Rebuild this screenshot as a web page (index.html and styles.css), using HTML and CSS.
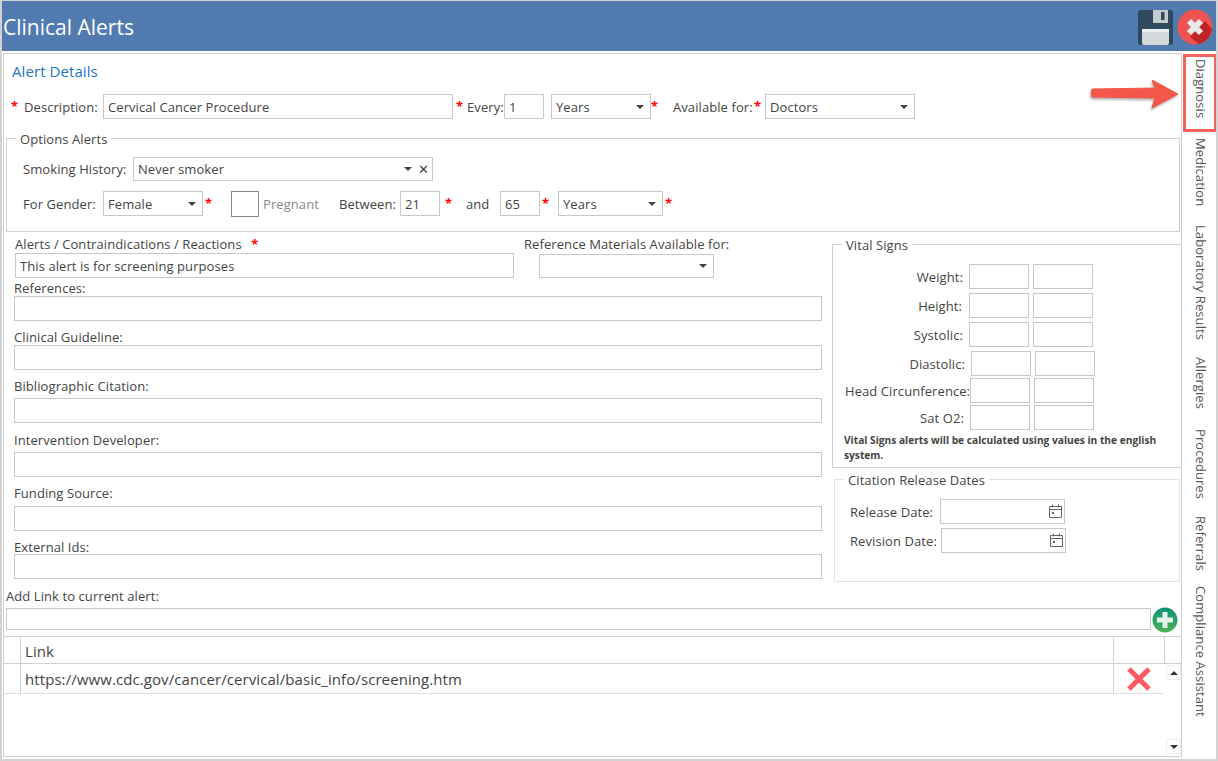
FILE: index.html
```html
<!DOCTYPE html>
<html lang="en">
<head>
<meta charset="utf-8">
<title>Clinical Alerts</title>
<link rel="stylesheet" href="styles.css">
</head>
<body>
<div class="window">
  <header class="titlebar">
    <h1 class="title">Clinical Alerts</h1>
    <div class="title-actions">
      <svg class="icon-save" viewBox="0 0 35 35" width="35" height="35">
        <rect width="35" height="35" rx="3" fill="#2f4a5e"/>
        <rect x="15" y="0" width="15" height="13" fill="#c5ccd0"/>
        <rect x="23" y="2" width="3.5" height="8" fill="#2f4a5e"/>
        <rect x="4" y="19" width="27" height="16" rx="2" fill="#d3d8da"/>
        <rect x="4" y="19" width="27" height="3" fill="#eceff0"/>
      </svg>
      <svg class="icon-close" viewBox="0 0 36 36" width="36" height="36">
        <circle cx="18" cy="18" r="17.5" fill="#ef5350"/>
        <path d="M13 28 L28 12 L35 20 A17.5 17.5 0 0 1 22 35 Z" fill="#b71c1c" opacity=".85"/>
        <path d="M12 12 L24 24 M24 12 L12 24" stroke="#eaeaea" stroke-width="6" fill="none"/>
      </svg>
    </div>
  </header>

  <div class="content">
    <main class="main">
      <h2 class="heading">Alert Details</h2>

      <div class="row row-top">
        <span class="req req-lead">*</span>
        <label class="lbl lbl-desc">Description:</label>
        <div class="box w-desc">Cervical Cancer Procedure</div>
        <span class="req req-a">*</span>
        <label class="lbl lbl-every">Every:</label>
        <div class="box w-num">1</div>
        <div class="box select w-years ml-7">Years<i class="caret"></i></div>
        <span class="req">*</span>
        <label class="lbl lbl-avail">Available for:</label>
        <span class="req">*</span>
        <div class="box select w-avail ml-5">Doctors<i class="caret"></i></div>
      </div>

      <fieldset class="group options">
        <legend>Options Alerts</legend>
        <div class="row row-smoke">
          <label class="lbl lbl-smoke">Smoking History:</label>
          <div class="box select w-smoke">Never smoker<i class="caret caret-x"></i><span class="clear">✕</span></div>
        </div>
        <div class="row row-gender">
          <label class="lbl lbl-gender">For Gender:</label>
          <div class="box select w-gender">Female<i class="caret"></i></div>
          <span class="req req-c">*</span>
          <span class="check"></span>
          <label class="lbl lbl-preg">Pregnant</label>
          <label class="lbl lbl-between">Between:</label>
          <div class="box w-num">21</div>
          <span class="req req-d">*</span>
          <label class="lbl lbl-and">and</label>
          <div class="box w-num">65</div>
          <span class="req req-c">*</span>
          <div class="box select w-years2 ml-10">Years<i class="caret"></i></div>
          <span class="req req-c">*</span>
        </div>
      </fieldset>

      <section class="columns">
        <div class="col-left">
          <div class="alerts-grid">
            <div class="alerts-main">
              <label class="lbl-block alerts-label">Alerts / Contraindications / Reactions <span class="req req-inline">*</span></label>
              <div class="box w-alerts h-25">This alert is for screening purposes</div>
            </div>
            <div class="alerts-ref">
              <label class="lbl-block">Reference Materials Available for:</label>
              <div class="box select w-ref h-24">&nbsp;<i class="caret"></i></div>
            </div>
          </div>
          <div class="field f-refs"><label class="lbl-block">References:</label><div class="box w-full h-25"></div></div>
          <div class="field"><label class="lbl-block">Clinical Guideline:</label><div class="box w-full h-25"></div></div>
          <div class="field gap-4"><label class="lbl-block">Bibliographic Citation:</label><div class="box w-full h-25"></div></div>
          <div class="field gap-4 f-dev"><label class="lbl-block">Intervention Developer:</label><div class="box w-full h-25"></div></div>
          <div class="field gap-5"><label class="lbl-block">Funding Source:</label><div class="box w-full h-25"></div></div>
          <div class="field gap-n1"><label class="lbl-block">External Ids:</label><div class="box w-full h-25"></div></div>
        </div>

        <div class="col-right">
          <fieldset class="group vitals">
            <legend>Vital Signs</legend>
            <div class="vital"><label class="vital-lbl">Weight:</label><div class="box v-box"></div><div class="box v-box"></div></div>
            <div class="vital"><label class="vital-lbl l-height">Height:</label><div class="box v-box"></div><div class="box v-box"></div></div>
            <div class="vital"><label class="vital-lbl">Systolic:</label><div class="box v-box"></div><div class="box v-box"></div></div>
            <div class="vital vital-shift2"><label class="vital-lbl">Diastolic:</label><div class="box v-box"></div><div class="box v-box"></div></div>
            <div class="vital vital-tight vital-shift1"><label class="vital-lbl">Head Circunference:</label><div class="box v-box"></div><div class="box v-box"></div></div>
            <div class="vital vital-tight vital-shift1"><label class="vital-lbl l-sat">Sat O2:</label><div class="box v-box"></div><div class="box v-box"></div></div>
            <p class="note">Vital Signs alerts will be calculated using values in the english system.</p>
          </fieldset>
          <fieldset class="group citation">
            <legend>Citation Release Dates</legend>
            <div class="date-row">
              <label class="lbl lbl-release">Release Date:</label>
              <div class="box w-date">
                <svg class="cal" viewBox="0 0 13 14" width="13" height="14"><path d="M.5 2.5h12v11H.5zM.5 5.5h12M3.5 .5v3M9.5 .5v3" fill="none" stroke="#666"/><rect x="3" y="8" width="2" height="2" fill="#666"/></svg>
              </div>
            </div>
            <div class="date-row date-row-2">
              <label class="lbl lbl-revision">Revision Date:</label>
              <div class="box w-date">
                <svg class="cal" viewBox="0 0 13 14" width="13" height="14"><path d="M.5 2.5h12v11H.5zM.5 5.5h12M3.5 .5v3M9.5 .5v3" fill="none" stroke="#666"/><rect x="3" y="8" width="2" height="2" fill="#666"/></svg>
              </div>
            </div>
          </fieldset>
        </div>
      </section>

      <label class="lbl-block add-label">Add Link to current alert:</label>
      <div class="add-row">
        <div class="box w-link"></div>
        <svg class="icon-plus" viewBox="0 0 26 26" width="26" height="26">
          <defs><linearGradient id="plusfill" x1="0" y1="0" x2="0" y2="1"><stop offset="0" stop-color="#0f9178"/><stop offset="1" stop-color="#4cb25a"/></linearGradient></defs>
          <circle cx="13" cy="13" r="12.5" fill="url(#plusfill)"/>
          <path d="M10.5 5h5v5.5H21v5h-5.500v5.500h-5v-5.500H5v-5h5.500z" fill="#e6f3ec"/>
        </svg>
      </div>

      <div class="grid">
        <div class="grid-head">
          <div class="cell-gutter"></div>
          <div class="cell-link">Link</div>
          <div class="cell-action"></div>
          <div class="cell-scroll"></div>
        </div>
        <div class="grid-body">
          <div class="grid-rows">
            <div class="grid-row">
              <div class="cell-gutter"></div>
              <div class="cell-link">https://www.cdc.gov/cancer/cervical/basic_info/screening.htm</div>
              <div class="cell-action">
                <svg viewBox="0 0 26 26" width="26" height="26"><path d="M3 3 L23 23 M23 3 L3 23" stroke="#ff5a5f" stroke-width="5"/></svg>
              </div>
            </div>
          </div>
          <div class="scrollbar">
            <span class="scroll-btn"><i class="tri-up"></i></span>
            <span class="scroll-btn"><i class="tri-down"></i></span>
          </div>
        </div>
      </div>
    </main>

    <nav class="tabs">
      <div class="tab tab-on">Diagnosis</div>
      <div class="tab">Medication</div>
      <div class="tab">Laboratory Results</div>
      <div class="tab">Allergies</div>
      <div class="tab">Procedures</div>
      <div class="tab">Referrals</div>
      <div class="tab">Compliance Assistant</div>
    </nav>
  </div>

  <div class="annot-box"></div>
  <svg class="annot-arrow" viewBox="0 0 92 34" width="92" height="34">
    <path d="M4 13 Q3 17 4 21 L67 22 L64 32 L90 18 L64 4 L67 12 Z" fill="#f4564a" stroke="#f4564a" stroke-linejoin="round"/>
  </svg>
</div>
</body>
</html>
```

FILE: styles.css
```css
* { box-sizing: border-box; }
html, body { margin: 0; padding: 0; }
body {
  font-family: "Open Sans", "Noto Sans", sans-serif;
  font-size: 13px;
  letter-spacing: .08px;
  color: #444;
  background: #fff;
}
.window {
  position: relative;
  width: 1218px;
  height: 761px;
  display: flex;
  flex-direction: column;
  border: 2px solid #d2d2d2;
  border-top: 1px solid #d2d2d2;
  overflow: hidden;
}
.titlebar {
  height: 50px;
  flex: none;
  margin-left: -2px;
  background: #517bb0;
  display: flex;
  align-items: center;
  justify-content: space-between;
  padding: 0 3px 0 3px;
}
.title {
  margin: 0;
  padding-top: 2px;
  font-size: 21px;
  font-weight: 400;
  letter-spacing: 0;
  color: #fff;
}
.title-actions { display: flex; align-items: center; gap: 4px; padding-top: 2px; }
.content {
  flex: 1;
  min-height: 0;
  display: flex;
  padding: 2px 0 2px 1px;
}
.main {
  width: 1179px;
  flex: none;
  border: 1px solid #cfcfcf;
  display: flex;
  flex-direction: column;
}
.heading {
  margin: 7px 0 0 8px;
  height: 20px;
  line-height: 20px;
  font-size: 15px;
  font-weight: 400;
  color: #1b75c4;
}
.row { display: flex; align-items: center; }
.row-top { margin-top: 13px; height: 25px; flex: none; }
.row-top .box { height: 25px; line-height: 24px; }
.lbl { white-space: nowrap; flex: none; }
.lbl-block { display: block; height: 16px; line-height: 16px; white-space: nowrap; }
.req { color: #f00; font-weight: 700; width: 6px; flex: none; line-height: 1; font-size: 13px; }
.req-lead { margin-left: 7px; }
.req-a { margin-left: 3px; }
.req-c { margin-left: 2px; }
.req-d { margin-left: 5px; }
.req-inline { width: auto; margin-left: 6px; }
.lbl-desc { margin-left: 7px; width: 79px; }
.lbl-every { margin-left: 5px; width: 37px; }
.lbl-avail { margin-left: 16px; width: 81px; }
.box {
  position: relative;
  height: 24px;
  line-height: 22px;
  border: 1px solid #c8c8c8;
  background: #fff;
  padding: 0 4px;
  white-space: nowrap;
  flex: none;
}
.h-25 { height: 25px; line-height: 24px; }
.h-24 { height: 24px; }
.w-desc { width: 350px; }
.w-num { width: 40px; }
.w-years { width: 100px; }
.w-avail { width: 150px; }
.ml-5 { margin-left: 5px; }
.ml-7 { margin-left: 7px; }
.ml-10 { margin-left: 10px; }
.caret {
  position: absolute;
  right: 6px;
  top: 50%;
  margin-top: -2px;
  border-left: 4px solid transparent;
  border-right: 4px solid transparent;
  border-top: 4px solid #444;
}
.caret-x { right: 20px; }
.clear { position: absolute; right: 3px; top: 0; font-size: 13px; color: #444; }

.group {
  margin: 0;
  border: 1px solid #cfcfcf;
  padding: 0;
}
.group legend {
  padding: 0 4px;
  height: 18px;
  line-height: 20px;
}
.options {
  margin: 10px 0 0 2px;
  width: 1174px;
  height: 103px;
  flex: none;
  padding: 0 16px;
}
.options legend { margin-left: -7px; }
.row-smoke { margin-top: 10px; height: 24px; }
.row-smoke .box { height: 24px; line-height: 23px; }
.row-gender { margin-top: 10px; height: 25px; }
.row-gender .box { height: 25px; line-height: 24px; }
.lbl-smoke { width: 110px; }
.w-smoke { width: 300px; }
.lbl-gender { width: 80px; }
.w-gender { width: 100px; }
.check {
  flex: none;
  width: 28px;
  height: 26px;
  margin-left: 20px;
  border: 1px solid #888;
  background: #fff;
}
.lbl-preg { margin-left: 4px; width: 56px; color: #888; }
.lbl-between { margin-left: 20px; width: 61px; }
.lbl-and { margin-left: 15px; width: 34px; }
.w-years2 { width: 105px; }

.columns { display: flex; flex: none; margin-top: 3px; height: 347px; }
.col-left { flex: none; width: 828px; padding: 1px 0 0 10px; }
.alerts-grid { display: flex; }
.alerts-main { margin-left: 1px; width: 509px; }
.alerts-label { margin-bottom: 1px; }
.alerts-ref { position: relative; }
.alerts-ref .box { margin: 2px 0 0 15px; }
.w-alerts { width: 499px; }
.w-ref { width: 175px; }
.w-full { width: 808px; }
.field { margin-top: 8px; }
.f-refs { margin-top: 2px; }
.f-dev { margin-top: 9px; }
.gap-4 .lbl-block { margin-bottom: 4px; }
.gap-5 .lbl-block { margin-bottom: 5px; }
.gap-n1 .lbl-block { margin-bottom: -1px; }

.col-right { flex: none; width: 350px; }
.vitals { width: 350px; height: 233px; padding: 0 0 0 11px; }
.vitals legend { margin-left: -2px; }
.vital { display: flex; align-items: center; gap: 4px; height: 25px; margin-top: 4px; }
.vitals legend + .vital { margin-top: 11px; }
.vital-tight { margin-top: 2px; }
.vital-shift1 { padding-left: 1px; }
.vital-shift2 { padding-left: 2px; }
.vital-lbl { width: 120px; text-align: right; padding-right: 1px; white-space: nowrap; margin-right: 1px; flex: none; }
.vital-lbl.l-height { padding-right: 2px; }
.vital-tight .vital-lbl { padding-right: 0; }
.vital-tight .vital-lbl.l-sat { padding-right: 1px; }
.v-box { width: 60px; height: 25px; }
.note {
  margin: 3px 0 0;
  font-size: 10.2px;
  letter-spacing: 0;
  line-height: 15px;
  font-weight: 700;
  width: 330px;
  color: #444;
}
.citation {
  margin: 2px 0 0 2px;
  width: 346px;
  height: 112px;
  padding: 0 0 0 15px;
  border-color: #e2e2e2;
}
.citation legend { margin-left: -6px; }
.date-row { display: flex; align-items: center; margin-top: 11px; height: 25px; }
.date-row-2 { margin-top: 4px; }
.lbl-release { width: 90px; }
.lbl-revision { width: 91px; }
.w-date { width: 125px; height: 25px; }
.cal { position: absolute; right: 2px; top: 4px; }

.add-label { margin: 6px 0 0 2px; }
.add-row { display: flex; align-items: flex-start; margin: 3px 0 0 2px; height: 25px; flex: none; }
.w-link { width: 1145px; height: 22px; margin-top: 1px; }
.icon-plus { margin-left: 1px; flex: none; }

.grid {
  flex: 1;
  min-height: 0;
  margin-top: 4px;
  border-top: 1px solid #cfcfcf;
  display: flex;
  flex-direction: column;
  font-size: 15px;
}
.grid-head { display: flex; height: 27px; flex: none; border-bottom: 1px solid #cfcfcf; line-height: 28px; }
.grid-row { display: flex; height: 30px; border-bottom: 1px solid #dedede; line-height: 31px; }
.cell-gutter { width: 17px; flex: none; border-right: 1px solid #cfd2d6; }
.cell-link { width: 1092px; flex: none; padding-left: 4px; }
.cell-action { width: 51px; flex: none; border-left: 1px solid #cfd2d6; display: flex; align-items: center; justify-content: center; }
.cell-scroll { width: 17px; flex: none; border-left: 1px solid #cfd2d6; }
.grid-body { flex: 1; min-height: 0; display: flex; }
.grid-rows { flex: 1; }
.scrollbar { width: 17px; flex: none; display: flex; flex-direction: column; justify-content: space-between; padding: 1px 1px 2px 2px; }
.scroll-btn { width: 15px; height: 15px; border: 1px solid #eee; display: flex; align-items: center; justify-content: center; }
.tri-up { border-left: 4px solid transparent; border-right: 4px solid transparent; border-bottom: 4px solid #333; }
.tri-down { border-left: 4px solid transparent; border-right: 4px solid transparent; border-top: 4px solid #333; }

.tabs {
  flex: 1;
  display: grid;
  grid-template-rows: 79px 87px 132px 72px 87px 70px 130px;
  padding-top: 6px;
  align-content: start;
}
.tab {
  writing-mode: vertical-rl;
  font-size: 13px;
  line-height: 30px;
  white-space: nowrap;
  color: #555;
}

.annot-box {
  position: absolute;
  left: 1181px;
  top: 53px;
  width: 34px;
  height: 78px;
  border: 3px solid #f0645a;
}
.annot-arrow {
  position: absolute;
  left: 1086px;
  top: 75px;
  filter: drop-shadow(-1px 2px 1px rgba(0,0,0,.3));
}
```
